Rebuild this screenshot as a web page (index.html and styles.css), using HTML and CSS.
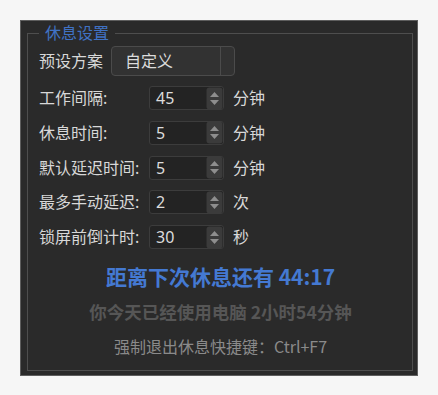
FILE: index.html
```html
<!DOCTYPE html>
<html lang="zh-CN">
<head>
<meta charset="utf-8">
<title>休息设置</title>
<link rel="stylesheet" href="styles.css">
</head>
<body>
<div class="panel">
  <fieldset class="group">
    <legend class="group-title">休息设置</legend>
    <div class="preset-row">
      <span class="label">预设方案</span>
      <div class="combo"><span class="combo-text">自定义</span><span class="combo-btn"></span></div>
    </div>
    <div class="form">
      <span class="label">工作间隔:</span>
      <div class="spin"><span class="spin-val">45</span><svg class="spin-btn" viewBox="0 0 17 23" width="17" height="23"><rect x="0.5" y="0.5" width="16" height="22" rx="3" fill="#3b3b3b"/><path d="M4 10 L8.5 5 L13 10 Z" fill="#8e8e8e"/><path d="M4 13 L8.5 18 L13 13 Z" fill="#8e8e8e"/></svg></div>
      <span class="unit">分钟</span>

      <span class="label">休息时间:</span>
      <div class="spin"><span class="spin-val">5</span><svg class="spin-btn" viewBox="0 0 17 23" width="17" height="23"><rect x="0.5" y="0.5" width="16" height="22" rx="3" fill="#3b3b3b"/><path d="M4 10 L8.5 5 L13 10 Z" fill="#8e8e8e"/><path d="M4 13 L8.5 18 L13 13 Z" fill="#8e8e8e"/></svg></div>
      <span class="unit">分钟</span>

      <span class="label">默认延迟时间:</span>
      <div class="spin"><span class="spin-val">5</span><svg class="spin-btn" viewBox="0 0 17 23" width="17" height="23"><rect x="0.5" y="0.5" width="16" height="22" rx="3" fill="#3b3b3b"/><path d="M4 10 L8.5 5 L13 10 Z" fill="#8e8e8e"/><path d="M4 13 L8.5 18 L13 13 Z" fill="#8e8e8e"/></svg></div>
      <span class="unit">分钟</span>

      <span class="label">最多手动延迟:</span>
      <div class="spin"><span class="spin-val">2</span><svg class="spin-btn" viewBox="0 0 17 23" width="17" height="23"><rect x="0.5" y="0.5" width="16" height="22" rx="3" fill="#3b3b3b"/><path d="M4 10 L8.5 5 L13 10 Z" fill="#8e8e8e"/><path d="M4 13 L8.5 18 L13 13 Z" fill="#8e8e8e"/></svg></div>
      <span class="unit">次</span>

      <span class="label">锁屏前倒计时:</span>
      <div class="spin"><span class="spin-val">30</span><svg class="spin-btn" viewBox="0 0 17 23" width="17" height="23"><rect x="0.5" y="0.5" width="16" height="22" rx="3" fill="#3b3b3b"/><path d="M4 10 L8.5 5 L13 10 Z" fill="#8e8e8e"/><path d="M4 13 L8.5 18 L13 13 Z" fill="#8e8e8e"/></svg></div>
      <span class="unit">秒</span>
    </div>
    <div class="status">
      <div class="countdown">距离下次休息还有 44:17</div>
      <div class="usage">你今天已经使用电脑 2小时54分钟</div>
      <div class="shortcut">强制退出休息快捷键：Ctrl+F7</div>
    </div>
  </fieldset>
</div>
</body>
</html>
```
FILE: styles.css
```css
* { box-sizing: border-box; }
html, body {
  margin: 0;
  padding: 0;
  background: #f6f6f6;
}
body {
  font-family: "Noto Sans", "Noto Sans CJK SC", sans-serif;
  font-size: 16px;
  color: #d8d8d8;
}
.panel {
  margin: 20px 0 0 20px;
  width: 398px;
  height: 356px;
  background: #2a2a2a;
  border: 1px solid #5e5e5e;
  padding: 2px 4px 4px 6px;
}
.group {
  margin: 0;
  height: 348px;
  border: 1px solid #4e4e4e;
  padding: 3px 10px 0 11px;
  min-width: 0;
}
.group-title {
  padding: 0 6px;
  margin: 0;
  color: #4072c4;
  font-size: 16px;
  line-height: 20px;
}
.preset-row {
  display: flex;
  align-items: center;
  gap: 8px;
  height: 30px;
}
.label {
  line-height: 20px;
  white-space: nowrap;
}
.combo {
  width: 124px;
  height: 30px;
  background: #323232;
  border: 1px solid #4b4b4b;
  border-radius: 4px;
  display: flex;
  align-items: center;
}
.combo-text {
  flex: 1;
  padding-left: 13px;
  line-height: 20px;
  color: #dcdcdc;
}
.combo-btn {
  width: 14px;
  height: 100%;
  border-left: 1px solid #4b4b4b;
}
.form {
  display: grid;
  grid-template-columns: 110px 75px auto;
  grid-auto-rows: 24px;
  row-gap: 10.8px;
  align-items: center;
  margin-top: 10px;
}
.spin {
  height: 24px;
  width: 75px;
  background: #232323;
  border: 1px solid #3c3c3c;
  border-radius: 3px;
  display: flex;
  align-items: center;
  justify-content: space-between;
  padding: 0 0 0 6px;
}
.spin-val {
  line-height: 20px;
  color: #dcdcdc;
}
.spin-btn {
  display: block;
}
.unit {
  margin-left: 9px;
  line-height: 20px;
}
.status {
  margin-top: 10px;
  text-align: center;
  font-family: "Noto Sans CJK SC", sans-serif;
}
.countdown {
  line-height: 35px;
  font-size: 21px;
  font-weight: bold;
  color: #4479d2;
}
.usage {
  line-height: 35px;
  font-size: 17.5px;
  font-weight: bold;
  color: #565656;
}
.shortcut {
  line-height: 35px;
  font-size: 16px;
  color: #8a8a8a;
}
```
